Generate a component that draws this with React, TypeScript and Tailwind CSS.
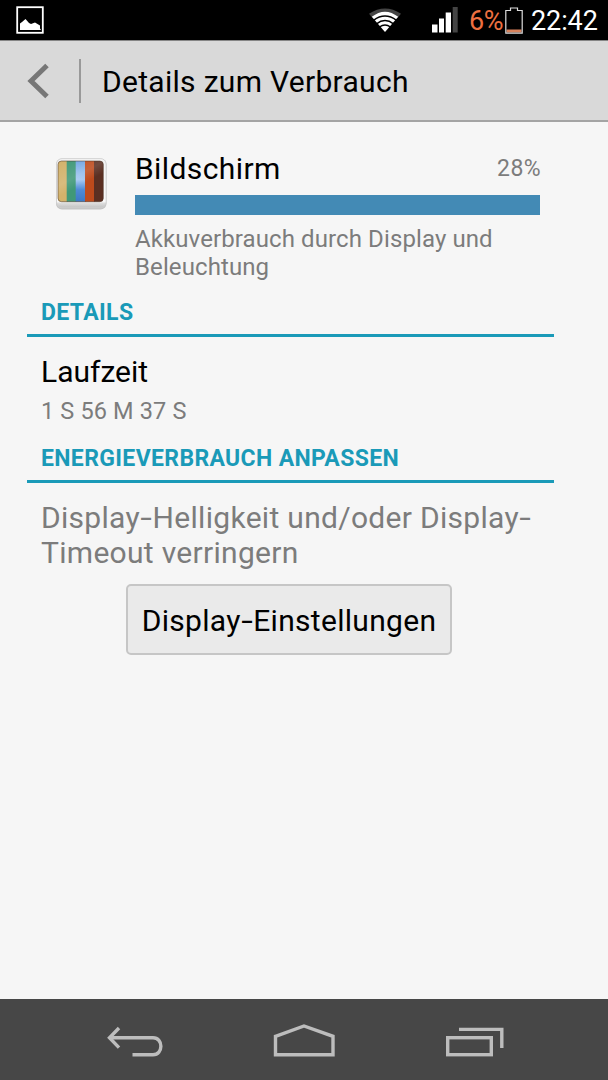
import type { ReactNode } from "react";

interface SectionHeaderProps {
    children: ReactNode;
}

function ScreenshotIcon() {
    return (
        <svg width="28" height="28" viewBox="0 0 28 28">
            <rect x="1.2" y="1.2" width="25.6" height="25.6" fill="none" stroke="#fff" strokeWidth="1.8" />
            <path d="M4 24V17.5L6 16L9.5 13L13 17L15 18L19 16.5L24 19.5V22.5L25 24Z" fill="#fff" />
        </svg>
    );
}

function WifiIcon() {
    return (
        <svg width="34" height="24" viewBox="0 0 34 24">
            <path d="M1 5.8Q17 -5 33 5.8L29.8 9.6Q17 1 4.2 9.6Z" fill="#444" />
            <path d="M3.8 8.8Q17 -1.5 30.2 8.8L17 24Z" fill="#fff" />
            <path d="M5.5 12.3Q17 3.7 28.5 12.3" fill="none" stroke="#000" strokeWidth="1.5" />
            <path d="M8.5 15.8Q17 9.2 25.5 15.8" fill="none" stroke="#000" strokeWidth="1.5" />
            <path d="M11.5 19Q17 14.8 22.5 19" fill="none" stroke="#000" strokeWidth="1.5" />
        </svg>
    );
}

function SignalIcon() {
    return (
        <svg width="26" height="26" viewBox="0 0 26 26">
            <rect x="0" y="17.5" width="5.5" height="8" fill="#fff" />
            <rect x="7" y="11.5" width="5" height="14" fill="#fff" />
            <rect x="13.7" y="5.5" width="5.3" height="20" fill="#fff" />
            <rect x="20.7" y="0" width="5" height="25.5" fill="#444" />
        </svg>
    );
}

function BatteryIcon() {
    return (
        <svg width="18" height="27" viewBox="0 0 18 27">
            <rect x="1.5" y="22.5" width="15" height="3" fill="#d9825c" />
            <path d="M.8 3.5H5.5V1H12.5V3.5H17.2V26.2H.8Z" fill="none" stroke="#ddd" strokeWidth="1.2" />
        </svg>
    );
}

function DisplayIcon() {
    return (
        <svg width="54" height="54" viewBox="0 0 54 54">
            <defs>
                <linearGradient id="frame" x1="0" y1="0" x2="0" y2="1">
                    <stop offset="0" stopColor="#f4f4f4" />
                    <stop offset=".87" stopColor="#f9f9f9" />
                    <stop offset=".91" stopColor="#dcdcdc" />
                    <stop offset="1" stopColor="#c2c2c2" />
                </linearGradient>
                <linearGradient id="blue" x1="0" y1="0" x2="0" y2="1">
                    <stop offset="0" stopColor="#6fa4e2" />
                    <stop offset=".45" stopColor="#a4c8f2" />
                    <stop offset=".7" stopColor="#4f8bd6" />
                    <stop offset="1" stopColor="#3a78c4" />
                </linearGradient>
                <linearGradient id="gloss" x1="0" y1="0" x2=".6" y2="1">
                    <stop offset="0" stopColor="#fff" stopOpacity="0" />
                    <stop offset=".45" stopColor="#fff" stopOpacity=".13" />
                    <stop offset=".65" stopColor="#fff" stopOpacity="0" />
                </linearGradient>
                <clipPath id="screen">
                    <rect x="4" y="5" width="45.3" height="40.7" rx="3.5" />
                </clipPath>
            </defs>
            <rect x="2" y="2.5" width="50.5" height="51" rx="6" fill="#c4c4c4" />
            <rect x="2.5" y="2.6" width="49.6" height="49.2" rx="5.5" fill="url(#frame)" stroke="#cfcfcf" strokeWidth=".8" />
            <g clipPath="url(#screen)">
                <rect x="4" y="5" width="9.5" height="41" fill="#d3b26b" />
                <rect x="12.7" y="5" width="9.5" height="41" fill="#409878" />
                <rect x="21.7" y="5" width="10" height="41" fill="url(#blue)" />
                <rect x="31" y="5" width="9.5" height="41" fill="#bd4a1c" />
                <rect x="40" y="5" width="10" height="41" fill="#5b2f22" />
                <rect x="4" y="5" width="46" height="41" fill="url(#gloss)" />
            </g>
            <rect x="4" y="5" width="45.3" height="40.7" rx="3.5" fill="none" stroke="#4a3526" strokeOpacity=".6" strokeWidth=".9" />
        </svg>
    );
}

function SectionHeader({ children }: SectionHeaderProps) {
    return (
        <h2 className="mx-[27px] h-[43px] w-[527px] border-b-[3px] border-[#1a9ab8] pt-px pl-3.5 text-[23px] leading-9 font-bold tracking-[0.35px] whitespace-nowrap text-[#1a9ab8]">
            {children}
        </h2>
    );
}

// Wider hyphen than the font's own
function Hyphen() {
    return <span className="mr-[2px] ml-[2px] inline-block scale-x-140">-</span>;
}

function StatusBar() {
    return (
        <div className="flex h-10 shrink-0 items-center bg-black pr-[10px] pl-4">
            <ScreenshotIcon />
            <div className="ml-auto flex items-center">
                <WifiIcon />
                <span className="ml-[30px]"><SignalIcon /></span>
                <span className="ml-[11px] w-[36px] pt-[2px] text-[27px] tracking-[-0.5px] whitespace-nowrap text-[#ee7040]">6%</span>
                <BatteryIcon />
                <span className="ml-2 w-[67px] pt-[2px] text-[27px] tracking-[-0.1px] whitespace-nowrap text-white">22:42</span>
            </div>
        </div>
    );
}

function NavBar() {
    return (
        <nav className="flex h-[81px] shrink-0 items-center bg-[#474747] pl-[106px]">
            <button aria-label="Zurück">
                <svg width="58" height="35" viewBox="0 0 58 35" fill="none" stroke="#bdbdbd" strokeWidth="3.4">
                    <path d="M3 15.8H47C57.5 15.8 57.5 32.7 47 32.7H26.5" />
                    <path d="M13 6L3.5 15.8L13 25.6" />
                </svg>
            </button>
            <button aria-label="Startseite" className="ml-[109px]">
                <svg width="62" height="35" viewBox="0 0 62 35" fill="none" stroke="#bdbdbd" strokeWidth="3.4">
                    <path d="M2.5 14.3L31 4L60 14.3V32.8H2.5Z" />
                </svg>
            </button>
            <button aria-label="Letzte Apps" className="ml-[110px]">
                <svg width="60" height="35" viewBox="0 0 60 35" fill="none" stroke="#bdbdbd" strokeWidth="3.4">
                    <rect x="2.7" y="15.7" width="43.6" height="17" />
                    <path d="M14 7.4H56.8V26" />
                </svg>
            </button>
        </nav>
    );
}

export default function App() {
    return (
        <div className="flex h-[1080px] w-[608px] flex-col overflow-hidden bg-[#f6f6f6] font-['Roboto',sans-serif] text-black">
            <StatusBar />

            {/* Action bar */}
            <header className="flex h-[82px] shrink-0 items-center border-t border-b-2 border-t-[#858585] border-b-[#a4a4a4] bg-[#d9d9d9] pl-[27px]">
                <svg width="22" height="36" viewBox="0 0 22 36" fill="none" stroke="#777" strokeWidth="5">
                    <path d="M20 2.5L4 18L20 33.5" />
                </svg>
                <div className="ml-[30px] h-11 w-[2px] bg-[#999]" />
                <h1 className="ml-[21px] pt-[2px] text-[30px] tracking-[0.3px] whitespace-nowrap">Details zum Verbrauch</h1>
            </header>

            <main className="flex-1">
                {/* Usage summary */}
                <div className="flex pt-[30px] pl-[54px]">
                    <div className="pt-1"><DisplayIcon /></div>
                    <div className="ml-[27px] w-[405px]">
                        <div className="flex h-[43px] justify-between leading-[34px]">
                            <span className="text-[30px] tracking-[0.4px]">Bildschirm</span>
                            <span className="-mr-px text-[23px] tracking-[0.4px] text-[#7c7c7c]">28%</span>
                        </div>
                        <div className="h-5 bg-[#438ab5]" />
                        <p className="mt-[10px] text-[24px] leading-7 tracking-[0.1px] whitespace-nowrap text-[#7c7c7c]">
                            Akkuverbrauch durch Display und
                            <br />
                            Beleuchtung
                        </p>
                    </div>
                </div>

                <div className="mt-[13px]">
                    <SectionHeader>DETAILS</SectionHeader>
                </div>
                <div className="px-[41px] pt-[17px]">
                    <div className="text-[30px] leading-9">Laufzeit</div>
                    <div className="mt-[5px] text-[23.5px] leading-8 tracking-[0.15px] text-[#7c7c7c]">1 S 56 M 37 S</div>
                </div>

                <div className="mt-[13px]">
                    <SectionHeader>ENERGIEVERBRAUCH ANPASSEN</SectionHeader>
                </div>
                <p className="pt-[17px] pl-[41px] text-[30px] leading-[35px] tracking-[0.3px] whitespace-nowrap text-[#7c7c7c]">
                    Display<Hyphen />Helligkeit und/oder Display<Hyphen />
                    <br />
                    Timeout verringern
                </p>
                <button className="mt-[14px] ml-[126px] h-[71px] w-[326px] rounded-[5px] border-2 border-[#c6c6c6] bg-[#eaeaea] pt-px text-[30px] tracking-[0.3px] whitespace-nowrap">
                    Display<Hyphen />Einstellungen
                </button>
            </main>

            <NavBar />
        </div>
    );
}
